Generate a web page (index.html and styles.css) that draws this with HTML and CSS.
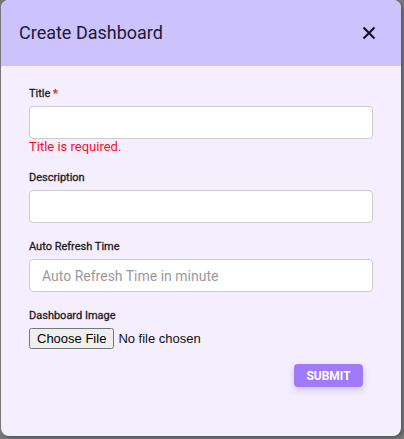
FILE: index.html
```html
<!DOCTYPE html>
<html lang="en">
<head>
<meta charset="utf-8">
<title>Create Dashboard</title>
<link rel="stylesheet" href="styles.css">
</head>
<body>
<div class="dialog">
  <div class="dialog-header">
    <h2 class="dialog-title">Create Dashboard</h2>
    <button class="close-btn" type="button" aria-label="Close">
      <svg width="14" height="14" viewBox="0 0 14 14"><path d="M1.5 1.5 L12.5 12.5 M12.5 1.5 L1.5 12.5" stroke="#111" stroke-width="2" fill="none"/></svg>
    </button>
  </div>
  <form class="dialog-body">
    <div class="field">
      <label class="label">Title <span class="req">*</span></label>
      <input class="text-input" type="text">
      <div class="error">Title is required.</div>
    </div>
    <div class="field">
      <label class="label">Description</label>
      <input class="text-input" type="text">
    </div>
    <div class="field">
      <label class="label">Auto Refresh Time</label>
      <input class="text-input" type="text" placeholder="Auto Refresh Time in minute">
    </div>
    <div class="field">
      <label class="label">Dashboard Image</label>
      <input class="file-input" type="file">
    </div>
    <div class="actions">
      <button class="submit-btn" type="button">SUBMIT</button>
    </div>
  </form>
</div>
</body>
</html>
```
FILE: styles.css
```css
html, body {
  margin: 0;
  padding: 0;
}
body {
  background: #777777;
  width: 404px;
  height: 439px;
  overflow: hidden;
  font-family: Roboto, "Liberation Sans", sans-serif;
}
.dialog {
  margin-left: 1px;
  width: 400px;
  height: 436px;
  border-radius: 8px;
  overflow: hidden;
  background: #f5eefe;
  box-shadow: 2px 2px 3px rgba(0,0,0,0.25);
}
.dialog-header {
  height: 66px;
  background: #ccc2fe;
  display: flex;
  align-items: center;
  justify-content: space-between;
  padding: 0 25px 0 18px;
  box-sizing: border-box;
}
.dialog-title {
  margin: 0;
  font-size: 18px;
  font-weight: 400;
  color: #1d1a2e;
  line-height: 22px;
}
.close-btn {
  border: 0;
  background: none;
  padding: 0;
  width: 14px;
  height: 14px;
  display: flex;
}
.dialog-body {
  padding: 21px 28px 0 28px;
  display: flex;
  flex-direction: column;
}
.field {
  display: flex;
  flex-direction: column;
  margin-bottom: 17px;
}
.label {
  font-size: 11px;
  font-weight: 400;
  -webkit-text-stroke: 0.3px #1c1a24;
  line-height: 13px;
  color: #1c1a24;
  margin-bottom: 6px;
}
.req {
  color: #ff1a1a;
  -webkit-text-stroke: 0.3px #ff1a1a;
}
.text-input {
  box-sizing: border-box;
  height: 33px;
  width: 344px;
  border: 1px solid #cccccc;
  border-radius: 4px;
  background: #ffffff;
  padding: 0 12px;
  font-family: Roboto, sans-serif;
  font-size: 14px;
  margin: 0;
}
.text-input::placeholder {
  color: #9a9a9a;
}
.error {
  color: #ff0f1f;
  font-size: 13px;
  line-height: 15px;
}
.file-input {
  font-family: "Liberation Sans", Arial, sans-serif;
  font-size: 13px;
  color: #111;
  margin: 0;
}
.actions {
  display: flex;
  justify-content: flex-end;
  padding-right: 10px;
  margin-top: -2px;
}
.submit-btn {
  background: #9f7bf7;
  color: #ffffff;
  border: 0;
  border-radius: 4px;
  font-family: Roboto, sans-serif;
  font-weight: 700;
  font-size: 12px;
  height: 23px;
  width: 69px;
  padding: 0;
  box-shadow: 0 3px 6px rgba(90, 70, 150, 0.25);
}
```
